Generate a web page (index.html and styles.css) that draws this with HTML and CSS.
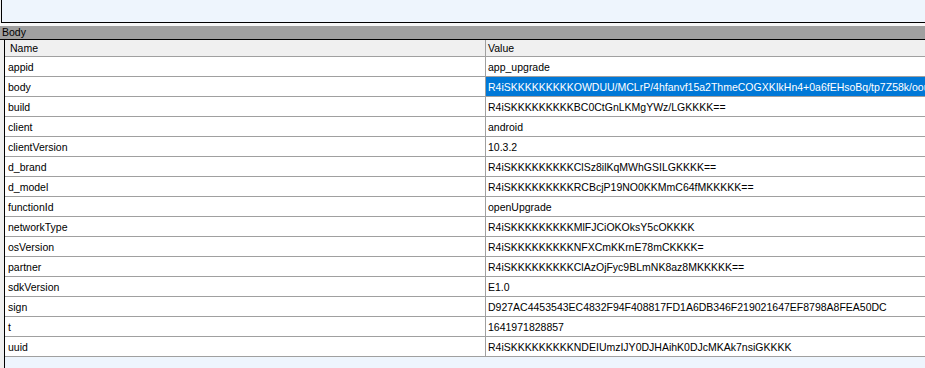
FILE: index.html
```html
<html>
    <head>
        <link rel="stylesheet" href="styles.css">
    </head>
    <body>
        <div id="top-pane"></div>
        <div id="spacer"></div>
        <div id="section-title">Body</div>
        <div id="grid-wrap">
            <div id="grid">
                <div class="row header">
                    <div class="cell name">Name</div>
                    <div class="cell value">Value</div>
                </div>
                <div class="row"><div class="cell name">appid</div><div class="cell value">app_upgrade</div></div>
                <div class="row"><div class="cell name">body</div><div class="cell value selected">R4iSKKKKKKKKKOWDUU/MCLrP/4hfanvf15a2ThmeCOGXKIkHn4+0a6fEHsoBq/tp7Z58k/oou9fQ2xYkPw0aLmN3zR</div></div>
                <div class="row"><div class="cell name">build</div><div class="cell value">R4iSKKKKKKKKKBC0CtGnLKMgYWz/LGKKKK==</div></div>
                <div class="row"><div class="cell name">client</div><div class="cell value">android</div></div>
                <div class="row"><div class="cell name">clientVersion</div><div class="cell value">10.3.2</div></div>
                <div class="row"><div class="cell name">d_brand</div><div class="cell value">R4iSKKKKKKKKKClSz8ilKqMWhGSILGKKKK==</div></div>
                <div class="row"><div class="cell name">d_model</div><div class="cell value">R4iSKKKKKKKKKRCBcjP19NO0KKMmC64fMKKKKK==</div></div>
                <div class="row"><div class="cell name">functionId</div><div class="cell value">openUpgrade</div></div>
                <div class="row"><div class="cell name">networkType</div><div class="cell value">R4iSKKKKKKKKKMlFJCiOKOksY5cOKKKK</div></div>
                <div class="row"><div class="cell name">osVersion</div><div class="cell value">R4iSKKKKKKKKKNFXCmKKrnE78mCKKKK=</div></div>
                <div class="row"><div class="cell name">partner</div><div class="cell value">R4iSKKKKKKKKKClAzOjFyc9BLmNK8az8MKKKKK==</div></div>
                <div class="row"><div class="cell name">sdkVersion</div><div class="cell value">E1.0</div></div>
                <div class="row"><div class="cell name">sign</div><div class="cell value">D927AC4453543EC4832F94F408817FD1A6DB346F219021647EF8798A8FEA50DC</div></div>
                <div class="row"><div class="cell name">t</div><div class="cell value">1641971828857</div></div>
                <div class="row"><div class="cell name">uuid</div><div class="cell value">R4iSKKKKKKKKKNDEIUmzIJY0DJHAihK0DJcMKAk7nsiGKKKK</div></div>
            </div>
        </div>
    </body>
</html>
```

FILE: styles.css
```css
html {
    height: 100%;
}
body {
    margin: 0;
    height: 100%;
    overflow: hidden;
    background-color: #f0f0f0;
    font-family: "Liberation Sans", Arial, sans-serif;
    font-size: 10.5px;
    color: #000;
    display: flex;
    flex-direction: column;
}
#top-pane {
    height: 22px;
    margin-left: 1px;
    border-left: 1px solid #000;
    border-bottom: 1px solid #000;
    background-color: #eef5fd;
    flex-shrink: 0;
}
#spacer {
    height: 3px;
    background-color: #f7f7f7;
    flex-shrink: 0;
}
#section-title {
    height: 13px;
    line-height: 13px;
    padding-left: 2px;
    background-color: #a0a0a0;
    border-bottom: 1px solid #000;
    flex-shrink: 0;
}
#grid-wrap {
    flex: 1;
    margin-left: 4px;
    border-left: 1px solid #000;
    background-color: #eef5fd;
    overflow: hidden;
}
#grid {
    background-color: #fff;
}
.row {
    display: flex;
    height: 19px;
    border-bottom: 1px solid #a0a0a0;
}
.row.header {
    height: 16px;
    background-color: #f0f0f0;
}
.cell {
    white-space: nowrap;
    overflow: hidden;
    display: flex;
    align-items: center;
}
.cell.name {
    width: 477px;
    padding-left: 3px;
    border-right: 1px solid #a0a0a0;
    flex-shrink: 0;
}
.header .cell.name {
    width: 475px;
    padding-left: 5px;
}
.cell.value {
    flex: 1;
    padding-left: 2px;
}
.cell.selected {
    background-color: #0078d7;
    color: #fff;
}
```
